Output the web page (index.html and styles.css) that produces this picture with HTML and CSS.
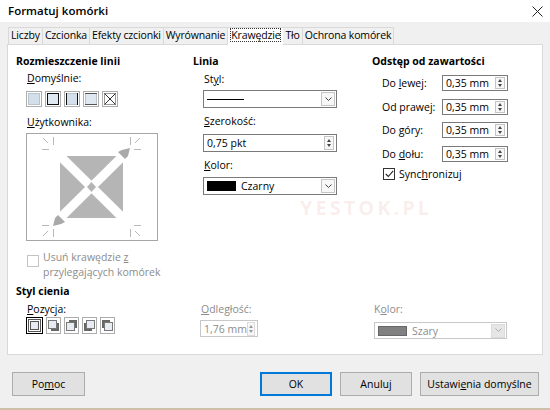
FILE: index.html
```html
<!DOCTYPE html>
<html lang="pl">
<head>
<meta charset="utf-8">
<title>Formatuj komórki</title>
<link rel="stylesheet" href="styles.css">
</head>
<body>
<div class="window">
  <div class="titlebar">
    <span class="title">Formatuj komórki</span>
    <svg class="close" width="11" height="11" viewBox="0 0 11 11"><path d="M0.5 0.5L10.5 10.5M10.5 0.5L0.5 10.5" stroke="#222" stroke-width="1"/></svg>
  </div>
  <div class="content">
    <div class="tabs">
      <div class="tab">Liczby</div>
      <div class="tab">Czcionka</div>
      <div class="tab">Efekty czcionki</div>
      <div class="tab">Wyrównanie</div>
      <div class="tab active"><span class="focus">Krawędzie</span></div>
      <div class="tab">Tło</div>
      <div class="tab">Ochrona komórek</div>
    </div>
    <div class="panel">
      <div class="top">
        <section class="col col-arr">
          <h3 class="heading">Rozmieszczenie linii</h3>
          <div class="label ind lbl-def"><u>D</u>omyślnie:</div>
          <div class="presets">
            <span class="preset"><svg width="12" height="12" viewBox="0 0 12 12"><rect x="0.5" y="0.5" width="11" height="11" fill="#d3dfea" stroke="#b9c3cc"/></svg></span>
            <span class="preset"><svg width="12" height="12" viewBox="0 0 12 12"><rect x="0.5" y="0.5" width="11" height="11" fill="#dfe8f0" stroke="#111"/></svg></span>
            <span class="preset"><svg width="12" height="12" viewBox="0 0 12 12"><rect x="0.5" y="0.5" width="11" height="11" fill="#d3dfea" stroke="#b9c3cc"/><path d="M0.5 0V12M11.5 0V12" stroke="#111"/></svg></span>
            <span class="preset"><svg width="12" height="12" viewBox="0 0 12 12"><rect x="0.5" y="0.5" width="11" height="11" fill="#dfe8f0" stroke="#b9c3cc"/><path d="M0 0.5H12M0 11.5H12" stroke="#555"/></svg></span>
            <span class="preset"><svg width="12" height="12" viewBox="0 0 12 12"><rect x="0.5" y="0.5" width="11" height="11" fill="#fff" stroke="#999"/><path d="M0.5 0.5L11.5 11.5M11.5 0.5L0.5 11.5" stroke="#333"/></svg></span>
          </div>
          <div class="label ind lbl-user"><u>U</u>żytkownika:</div>
          <div class="preview">
            <svg width="130" height="106" viewBox="0 0 130 106">
              <rect x="33" y="22" width="63" height="62" fill="#b5b5b5"/>
              <line x1="30" y1="19" x2="99" y2="87" stroke="#fff" stroke-width="9"/>
              <line x1="27" y1="90" x2="102" y2="16" stroke="#fff" stroke-width="9"/>
              <polygon points="64.5,48 69,53 64.5,58 60,53" fill="#b5b5b5"/>
              <polygon points="26,92 28,84 31,81 38,88 34,90" fill="#a9a9a9"/>
              <polygon points="103,14 101,22 98,25 91,18 95,16" fill="#a9a9a9"/>
              <g stroke="#b8b8b8" stroke-width="1">
                <path d="M26.5 3V11M15 15.5H22M16 4L21 9"/>
                <path d="M103.5 3V11M107 15.5H114M113 4L108 9"/>
                <path d="M26.5 95V103M15 91.5H22M16 102L21 97"/>
                <path d="M103.5 95V103M107 91.5H114M113 102L108 97"/>
              </g>
            </svg>
          </div>
          <div class="check-row disabled">
            <span class="checkbox"></span>
            <span class="check-text"><span class="ln">Usuń krawędzie <u>z</u></span><span class="ln">przylegających komórek</span></span>
          </div>
        </section>
        <section class="col col-line">
          <h3 class="heading">Linia</h3>
          <div class="label ind lbl-style">St<u>y</u>l:</div>
          <div class="select ind-s sel-style">
            <span class="sel-value"><span class="line-sample"></span></span>
            <span class="sel-btn"><svg width="7" height="5" viewBox="0 0 7 5"><path d="M0.5 0.5L3.5 3.5L6.5 0.5" fill="none" stroke="#444"/></svg></span>
          </div>
          <div class="label ind lbl-width"><u>S</u>zerokość:</div>
          <div class="spin ind-s spin-width">
            <span class="spin-value">0,75 pkt</span>
            <span class="spin-btn"><span class="up"></span><span class="down"></span></span>
          </div>
          <div class="label ind lbl-color"><u>K</u>olor:</div>
          <div class="select ind-s sel-color">
            <span class="sel-value"><span class="swatch black"></span>Czarny</span>
            <span class="sel-btn"><svg width="7" height="5" viewBox="0 0 7 5"><path d="M0.5 0.5L3.5 3.5L6.5 0.5" fill="none" stroke="#444"/></svg></span>
          </div>
        </section>
        <section class="col col-pad">
          <h3 class="heading">Odstęp od zawartości</h3>
          <div class="pad-rows">
            <div class="pad-row"><span class="pad-label">Do <u>l</u>ewej:</span><span class="spin small"><span class="spin-value">0,35 mm</span><span class="spin-btn"><span class="up"></span><span class="down"></span></span></span></div>
            <div class="pad-row"><span class="pad-label">Od prawej:</span><span class="spin small"><span class="spin-value">0,35 mm</span><span class="spin-btn"><span class="up"></span><span class="down"></span></span></span></div>
            <div class="pad-row"><span class="pad-label">Do góry:</span><span class="spin small"><span class="spin-value">0,35 mm</span><span class="spin-btn"><span class="up"></span><span class="down"></span></span></span></div>
            <div class="pad-row"><span class="pad-label">Do <u>d</u>ołu:</span><span class="spin small"><span class="spin-value">0,35 mm</span><span class="spin-btn"><span class="up"></span><span class="down"></span></span></span></div>
          </div>
          <div class="check-row sync">
            <span class="checkbox checked"><svg width="9" height="8" viewBox="0 0 9 8"><path d="M0.8 4L3.3 6.5L8.2 0.8" fill="none" stroke="#222" stroke-width="1.1"/></svg></span>
            <span class="check-text">Sync<u>h</u>ronizuj</span>
          </div>
        </section>
      </div>
      <section class="shadow">
        <h3 class="heading">Styl cienia</h3>
        <div class="shadow-grid">
          <div class="sh-col">
            <div class="label ind"><u>P</u>ozycja:</div>
            <div class="sh-presets">
              <span class="shp selected"><svg width="11" height="11" viewBox="0 0 11 11"><rect x="1.5" y="1.5" width="8" height="8" fill="#e6ecf2" stroke="#555"/></svg></span>
              <span class="shp"><svg width="11" height="11" viewBox="0 0 11 11"><rect x="3" y="3" width="8" height="8" fill="#666"/><rect x="0.5" y="0.5" width="8" height="8" fill="#e6ecf2" stroke="#777"/></svg></span>
              <span class="shp"><svg width="11" height="11" viewBox="0 0 11 11"><rect x="3" y="0" width="8" height="8" fill="#666"/><rect x="0.5" y="2.5" width="8" height="8" fill="#e6ecf2" stroke="#777"/></svg></span>
              <span class="shp"><svg width="11" height="11" viewBox="0 0 11 11"><rect x="0" y="3" width="8" height="8" fill="#666"/><rect x="2.5" y="0.5" width="8" height="8" fill="#e6ecf2" stroke="#777"/></svg></span>
              <span class="shp"><svg width="11" height="11" viewBox="0 0 11 11"><rect x="0" y="0" width="8" height="8" fill="#666"/><rect x="2.5" y="2.5" width="8" height="8" fill="#e6ecf2" stroke="#777"/></svg></span>
            </div>
          </div>
          <div class="sh-col dist">
            <div class="label disabled-text"><u>O</u>dległość:</div>
            <div class="spin dis sh-spin">
              <span class="spin-value">1,76 mm</span>
              <span class="spin-btn"><span class="up"></span><span class="down"></span></span>
            </div>
          </div>
          <div class="sh-col col3">
            <div class="label disabled-text">K<u>o</u>lor:</div>
            <div class="select dis sh-sel">
              <span class="sel-value"><span class="swatch grey"></span>Szary</span>
              <span class="sel-btn"><svg width="7" height="5" viewBox="0 0 7 5"><path d="M0.5 0.5L3.5 3.5L6.5 0.5" fill="none" stroke="#aaa"/></svg></span>
            </div>
          </div>
        </div>
      </section>
    </div>
    <div class="buttons">
      <button class="btn help">Po<u>m</u>oc</button>
      <span class="spacer"></span>
      <button class="btn default">OK</button>
      <button class="btn">Anuluj</button>
      <button class="btn wide">Ustawi<u>e</u>nia domyślne</button>
    </div>
  </div>
  <div class="watermark">YESTOK.PL</div>
</div>
</body>
</html>
```
FILE: styles.css
```css
* { box-sizing: border-box; }
html, body { margin: 0; padding: 0; }
body {
  width: 550px;
  height: 410px;
  overflow: hidden;
  background: #f0f0f0;
  font-family: "Open Sans", "Noto Sans", "Liberation Sans", sans-serif;
  font-size: 10.5px;
  color: #000;
}
u { text-decoration: underline; text-underline-offset: 1px; }
.window {
  position: relative;
  width: 550px;
  height: 410px;
  border-bottom: 2px solid #cdbfa8;
}
.titlebar {
  height: 22px;
  background: #fff;
  display: flex;
  align-items: center;
  justify-content: space-between;
  padding: 0 7px 2px 8px;
}
.title { font-size: 11.5px; font-weight: 600; }
.close { margin-top: 2px; }
.content { padding: 5px 7px 0 7px; }
.tabs { display: flex; height: 17px; padding-left: 1px; align-items: flex-end; }
.tab {
  height: 17px;
  line-height: 15px;
  padding: 0 2px;
  border: 1px solid #d9d9d9;
  border-bottom: none;
  border-right: none;
  background: #f0f0f0;
  white-space: nowrap;
  letter-spacing: -0.15px;
}
.tab:last-child { border-right: 1px solid #d9d9d9; }
.tab.active { background: #fff; position: relative; z-index: 1; margin-bottom: -1px; height: 18px; }
.tab.active + .tab { border-left: none; }
.focus { outline: 1px dotted #333; outline-offset: -1px; padding: 0 1px; }
.panel {
  height: 311px;
  border: 1px solid #d9d9d9;
  background: #fff;
  padding: 9px 0 0 8px;
}
.heading { margin: 0; font-size: 10.5px; font-weight: 700; line-height: 14px; }
.label { line-height: 14px; white-space: nowrap; }
.ind { margin-left: 11px; }
.ind-s { margin-left: 10px; }
.top { display: grid; grid-template-columns: 177px 179px 1fr; height: 230px; }

/* column 1 */
.lbl-def { margin-top: 3px; }
.presets { display: flex; gap: 3px; margin: 6px 0 0 10px; }
.preset {
  width: 16px; height: 16px;
  border: 1px solid #adadad;
  background: #fff;
  display: flex; align-items: center; justify-content: center;
}
.lbl-user { margin-top: 8px; }
.preview {
  width: 132px; height: 108px;
  margin: 4px 0 0 10px;
  border: 1px solid #a6a6a6;
  background: #fff;
}
.preview svg { display: block; }
.check-row { display: flex; align-items: flex-start; }
.col-arr .check-row { margin: 14px 0 0 11px; }
.checkbox {
  width: 12px; height: 12px;
  border: 1px solid #333;
  background: #fff;
  flex: none;
  display: flex; align-items: center; justify-content: center;
}
.disabled .checkbox { border-color: #c4c4c4; }
.check-text { margin-left: 4px; line-height: 12px; }
.disabled .check-text, .disabled-text { color: #8c8c8c; }
.col-arr .check-text { margin-top: -5px; display: flex; flex-direction: column; }
.col-arr .check-text .ln { line-height: 14.5px; display: block; white-space: nowrap; }

/* column 2 */
.lbl-style { margin-top: 4px; }
.select, .spin {
  display: flex;
  align-items: center;
  background: #fff;
  border: 1px solid #7a7a7a;
}
.select { width: 134px; height: 18px; margin-top: 4px; }
.sel-value { flex: 1; display: flex; align-items: center; padding-left: 3px; }
.sel-btn {
  width: 14px; height: 14px;
  margin-right: 1px;
  border: 1px solid #c4c4c4;
  background: #f7f7f7;
  display: flex; align-items: center; justify-content: center;
}
.line-sample { width: 37px; height: 1px; background: #000; }
.lbl-width { margin-top: 6px; }
.spin { height: 18px; }
.spin-width { width: 134px; margin-top: 6px; }
.spin-value { flex: 1; padding-left: 3px; white-space: nowrap; }
.spin-btn {
  width: 10px; height: 14px;
  margin-right: 2px;
  border: 1px solid #c4c4c4;
  background: #f7f7f7;
  display: flex; flex-direction: column; align-items: center; justify-content: center; gap: 2px;
}
.up, .down { width: 0; height: 0; border-left: 2.5px solid transparent; border-right: 2.5px solid transparent; }
.up { border-bottom: 3px solid #444; }
.down { border-top: 3px solid #444; }
.lbl-color { margin-top: 6px; }
.sel-color { margin-top: 5px; }
.swatch { width: 29px; height: 10px; margin-right: 5px; }
.swatch.black { background: #000; }
.swatch.grey { background: #808080; border: 1px solid #666; }

/* column 3 */
.pad-rows { display: flex; flex-direction: column; gap: 7.7px; margin-top: 7px; }
.pad-row { display: flex; align-items: center; height: 16px; margin-left: 10px; }
.pad-label { width: 60px; white-space: nowrap; }
.spin.small { width: 66px; height: 16px; }
.spin.small .spin-btn { height: 12px; }
.sync { margin: 6px 0 0 11px; }
.sync .check-text { margin-top: 0; line-height: 12px; }

/* shadow */
.shadow-grid { display: grid; grid-template-columns: 184px 174px 1fr; }
.sh-col .label { margin-top: 4px; }
.sh-presets { display: flex; gap: 3px; margin: 1px 0 0 10px; align-items: center; }
.shp {
  width: 15px; height: 17px;
  border: 1px solid #adadad;
  background: #fff;
  display: flex; align-items: center; justify-content: center;
}
.shp.selected { width: 17px; border: 1px solid #000; box-shadow: inset 0 0 0 1px #fff, inset 0 0 0 2px #555; }
.dist .label { margin-left: 1px; }
.spin.dis, .select.dis { border-color: #c8c8c8; color: #8c8c8c; }
.spin.dis .spin-btn, .select.dis .sel-btn { border-color: #dcdcdc; }
.spin.dis .up { border-bottom-color: #999; }
.spin.dis .down { border-top-color: #999; }
.sh-spin { width: 58px; height: 17px; margin-top: 4px; }
.sh-sel { width: 133px; height: 17px; margin-top: 6px; }
.sh-sel .sel-btn { background: #e6e6e6; }

/* buttons */
.buttons { display: flex; gap: 8px; margin-top: 17px; padding: 0 4px 0 5px; }
.spacer { flex: 1; }
.btn {
  width: 72px; height: 24px;
  font: inherit;
  color: #000;
  background: #e1e1e1;
  border: 1px solid #adadad;
  padding: 0;
}
.btn.help { width: 73px; }
.btn.default { border: 2px solid #0078d7; }
.btn.wide { width: 119px; }

.watermark {
  position: absolute;
  left: 300px; top: 194px;
  font-size: 20px;
  font-weight: 700;
  letter-spacing: 3px;
  color: rgba(214, 120, 110, 0.13);
}
```
